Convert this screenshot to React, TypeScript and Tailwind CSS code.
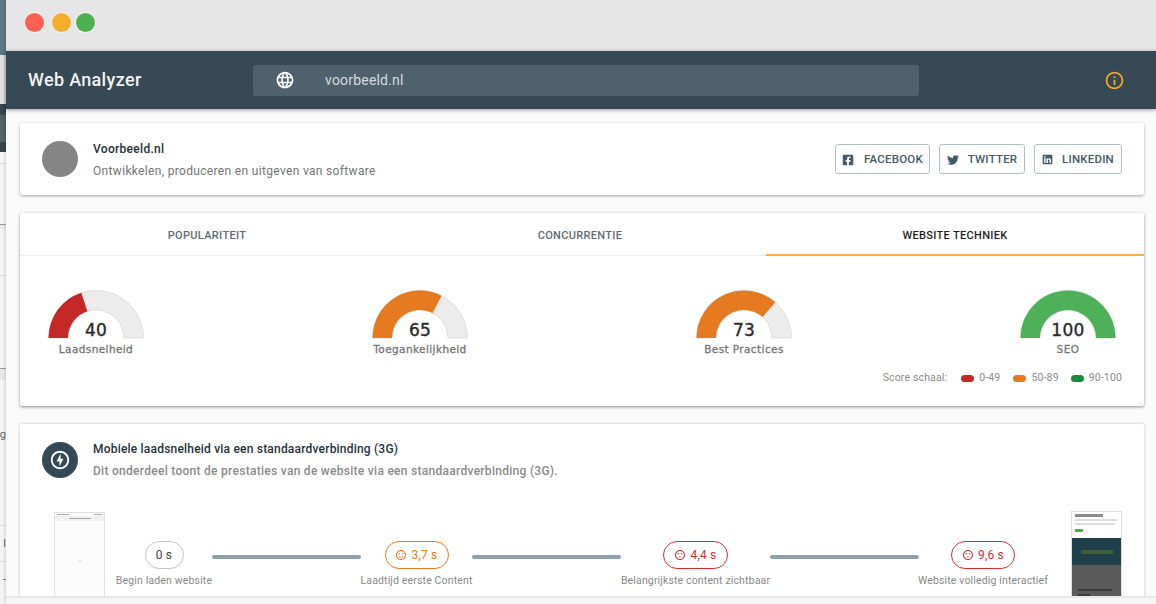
import React from "react";
import { FaFacebookSquare, FaTwitter, FaLinkedin } from "react-icons/fa";
import {
  MdLanguage,
  MdInfoOutline,
  MdOutlineOfflineBolt,
  MdSentimentDissatisfied,
  MdOutlineSentimentSatisfied,
} from "react-icons/md";

function Gauge({ score, color, label }: { score: number; color: string; label: string }) {
  const cx = 50;
  const cy = 50;
  const R = 47.5;
  const r = 28;
  const a = Math.PI * (1 - score / 100);
  const ox = cx + R * Math.cos(a);
  const oy = cy - R * Math.sin(a);
  const ix = cx + r * Math.cos(a);
  const iy = cy - r * Math.sin(a);
  const bg = `M${cx - R} ${cy}A${R} ${R} 0 0 1 ${cx + R} ${cy}L${cx + r} ${cy}A${r} ${r} 0 0 0 ${cx - r} ${cy}Z`;
  const fg = `M${cx - R} ${cy}A${R} ${R} 0 0 1 ${ox} ${oy}L${ix} ${iy}A${r} ${r} 0 0 0 ${cx - r} ${cy}Z`;
  return (
    <div className="w-[100px] flex flex-col items-center">
      <div className="relative w-[100px] h-[51px]">
        <svg width="100" height="51" viewBox="0 0 100 51" className="block">
          <path d={bg} fill="#ececec" stroke="#d9d9d9" strokeWidth="0.8" />
          <path d={fg} fill={color} />
        </svg>
        <div className="absolute left-0 right-0 top-[32px] text-center text-[17px] leading-[21px] font-['DejaVu_Sans',sans-serif] font-medium tracking-[0.3px] text-[#2b2b2b] [-webkit-text-stroke:0.4px_#2b2b2b]">
          {score}
        </div>
      </div>
      <div className="mt-[3px] whitespace-nowrap text-[10.5px] leading-[15px] font-['DejaVu_Sans',sans-serif] tracking-[0.4px] text-[#757575] [-webkit-text-stroke:0.3px_#757575]">
        {label}
      </div>
    </div>
  );
}

function Social({ icon, label, w, gap }: { icon: React.ReactNode; label: string; w: string; gap: string }) {
  return (
    <div className={`${w} ${gap} h-[30px] pt-px flex items-center justify-center rounded-[3px] border border-[#b0bec5] text-[11.5px] font-medium tracking-[0.2px] text-[#455a64]`}>
      {icon}
      <span>{label}</span>
    </div>
  );
}

function Step({
  value,
  label,
  w,
  pill,
  face,
}: {
  value: string;
  label: string;
  w: string;
  pill: string;
  face?: React.ReactNode;
}) {
  return (
    <div className={`${w} shrink-0 flex flex-col items-center`}>
      <div className={`${pill} h-[28px] rounded-full border bg-white flex items-center justify-center gap-[4px] text-[12px] tracking-[0.2px]`}>
        {face}
        <span>{value}</span>
      </div>
      <div className="mt-[4px] whitespace-nowrap text-[10.5px] leading-[15px] tracking-[0.15px] text-[#888888]">{label}</div>
    </div>
  );
}

function Bar() {
  return <div className="w-[149px] h-[4px] mt-[14px] shrink-0 rounded-full bg-[#90a0a8]" />;
}

function Legend({ color, label, w }: { color: string; label: string; w: string }) {
  return (
    <div className={`flex items-center gap-[5px] ${w}`}>
      <span className={`w-[13px] h-[7px] rounded-full ${color}`} />
      <span>{label}</span>
    </div>
  );
}

export default function App() {
  return (
    <div className="w-[1156px] h-[604px] overflow-hidden flex bg-white font-['Roboto',sans-serif]">
      <aside className="w-[6px] h-full shrink-0 flex flex-col bg-[#f4f4f4] overflow-hidden text-[11px] text-[#666666]">
        <div className="h-[55px] shrink-0 bg-[#5c7986]" />
        <div className="h-[49px] shrink-0 bg-[#e2e2e2]" />
        <div className="h-[11px] shrink-0 bg-[#37474f]" />
        <div className="h-[27px] shrink-0 bg-[#52616a]" />
        <div className="h-[10px] shrink-0 bg-[#37474f]" />
        <div className="h-[11px] shrink-0 bg-[#f5f5f5]" />
        <div className="h-[61px] shrink-0 border-t border-[#e2e2e2]" />
        <div className="h-[5px] shrink-0 border-t border-[#9a9a9a] bg-[#e9e9e9]" />
        <div className="h-[46px] shrink-0" />
        <div className="h-[93px] shrink-0 border-t border-[#dddddd]" />
        <div className="h-[12px] shrink-0 border-t border-[#9a9a9a] bg-[#e9e9e9]" />
        <div className="h-[145px] shrink-0 flex flex-col">
          <div className="mt-[48px] leading-[14px] w-[6px] overflow-hidden flex justify-end">g</div>
        </div>
        <div className="h-[36px] shrink-0 border-t border-[#dddddd] flex items-center justify-end leading-none">l</div>
        <div className="h-[36px] shrink-0 border-t border-[#dddddd] flex items-center justify-end leading-none">-</div>
      </aside>

      <div className="flex-1 min-w-0 h-full flex flex-col bg-[#fafafa] shadow-[-1px_0_3px_rgba(0,0,0,0.15)]">
        <div className="h-[51px] shrink-0 bg-[#e6e6e6] flex items-center gap-[6px] pl-[19px] pb-[7px]">
          <span className="w-[19px] h-[19px] rounded-full bg-[#ff5f52] shadow-[0_0_0_1px_#f4f4f4]" />
          <span className="w-[19px] h-[19px] ml-[2px] rounded-full bg-[#f5ad2e] shadow-[0_0_0_1px_#f4f4f4]" />
          <span className="w-[19px] h-[19px] -ml-[1px] rounded-full bg-[#4caf50] shadow-[0_0_0_1px_#f4f4f4]" />
        </div>

        <header className="h-[58px] shrink-0 z-10 bg-[#374955] shadow-[0_1px_4px_rgba(0,0,0,0.4)] flex items-center pl-[22px]">
          <div className="w-[225px] shrink-0 pb-[2px] text-[18px] font-medium tracking-[0.33px] text-white/95">Web Analyzer</div>
          <div className="w-[666px] h-[31px] rounded-[3px] bg-[#4f616c] flex items-center pl-[22px]">
            <MdLanguage className="w-[20px] h-[20px] text-white" />
            <span className="ml-[30px] text-[14px] tracking-[0.2px] text-[#d5dcdf]">voorbeeld.nl</span>
          </div>
          <MdInfoOutline className="w-[21px] h-[21px] ml-[185px] text-[#f5a623]" />
        </header>

        <main className="flex-1 min-h-0 overflow-hidden pl-[14px] pr-[12px] pt-[14px] flex flex-col gap-[18px]">
          <section className="h-[72px] shrink-0 rounded-[3px] bg-white shadow-[0_1px_3px_rgba(0,0,0,0.35)] flex items-center pl-[22px] pr-[22px]">
            <div className="w-[36px] h-[36px] rounded-full bg-[#858585]" />
            <div className="ml-[15px] flex-1 pt-[2px]">
              <div className="text-[12px] leading-[18px] font-medium tracking-[0.3px] text-[#263238]">Voorbeeld.nl</div>
              <div className="mt-[4px] text-[12px] leading-[18px] tracking-[0.33px] text-[#757575]">
                Ontwikkelen, produceren en uitgeven van software
              </div>
            </div>
            <div className="flex gap-[9px]">
              <Social w="w-[95px]" gap="gap-[10px]" label="FACEBOOK" icon={<FaFacebookSquare className="w-[12px] h-[12px]" />} />
              <Social w="w-[86px]" gap="gap-[9px]" label="TWITTER" icon={<FaTwitter className="w-[12px] h-[12px]" />} />
              <Social w="w-[88px]" gap="gap-[9px]" label="LINKEDIN" icon={<FaLinkedin className="w-[11px] h-[11px]" />} />
            </div>
          </section>

          <section className="h-[193px] shrink-0 rounded-[2px] bg-white shadow-[0_1px_3px_rgba(0,0,0,0.45)] flex flex-col">
            <div className="h-[43px] shrink-0 flex text-[11px] font-medium tracking-[0.33px] border-b border-[#eeeeee]">
              <div className="w-[374px] pt-[5px] flex items-center justify-center text-[#5f6b72]">POPULARITEIT</div>
              <div className="w-[372px] pt-[5px] flex items-center justify-center text-[#5f6b72]">CONCURRENTIE</div>
              <div className="flex-1 pt-[5px] flex items-center justify-center text-[#1f1f1f] border-b-2 border-[#f5b04c] -mb-px">WEBSITE TECHNIEK</div>
            </div>
            <div className="pt-[32px] pl-[26px] pr-[26px] flex justify-between">
              <Gauge score={40} color="#c62828" label="Laadsnelheid" />
              <Gauge score={65} color="#e67a21" label="Toegankelijkheid" />
              <Gauge score={73} color="#e67a21" label="Best Practices" />
              <Gauge score={100} color="#4fb05a" label="SEO" />
            </div>
            <div className="mt-[13px] pr-[22px] flex justify-end items-center h-[16px] text-[10.5px] tracking-[0.15px] text-[#8a8a8a]">
              <span className="mr-[14px]">Score schaal:</span>
              <Legend color="bg-[#c62828]" label="0-49" w="mr-[13px]" />
              <Legend color="bg-[#e67a21]" label="50-89" w="mr-[12px]" />
              <Legend color="bg-[#1e8a3f]" label="90-100" w="" />
            </div>
          </section>

          <section className="shrink-0 h-[200px] rounded-[2px] bg-white shadow-[0_0_3px_rgba(0,0,0,0.25)] pl-[22px] pr-[22px] pt-[18px]">
            <div className="flex items-center h-[36px]">
              <div className="w-[36px] h-[36px] rounded-full bg-[#344955] flex items-center justify-center">
                <MdOutlineOfflineBolt className="w-[22px] h-[22px] text-white" />
              </div>
              <div className="ml-[15px]">
                <div className="text-[12px] leading-[18px] font-medium tracking-[0.2px] text-[#263238]">
                  Mobiele laadsnelheid via een standaardverbinding (3G)
                </div>
                <div className="mt-[4px] text-[12px] leading-[18px] font-medium tracking-[0.28px] text-[#8a8a8a]">
                  Dit onderdeel toont de prestaties van de website via een standaardverbinding (3G).
                </div>
              </div>
            </div>

            <div className="mt-[34px] flex items-start">
              <div className="ml-[12px] w-[51px] h-[110px] shrink-0 border border-[#e2e2e2] bg-[#fcfcfc] overflow-hidden flex flex-col items-center">
                <div className="w-full h-[2px] mt-[1px] flex justify-between px-[2px] blur-[0.5px]">
                  <span className="w-[12px] h-[1px] bg-[#aaaaaa]" />
                  <span className="w-[8px] h-[1px] bg-[#aaaaaa]" />
                </div>
                <div className="w-full h-[5px] bg-[#f0f0f0] flex justify-center items-center blur-[0.5px]">
                  <span className="w-[22px] h-[1px] bg-[#aaaaaa]" />
                </div>
                <span className="mt-[39px] w-[2px] h-[2px] bg-[#e2e2e2]" />
              </div>
              <div className="ml-[11px] pt-[29px] flex items-start">
                <Step w="w-[96px]" pill="w-[39px] border-[#c4c4c4] text-[#444444]" value="0 s" label="Begin laden website" />
                <Bar />
                <Step
                  w="w-[111px]"
                  pill="w-[64px] border-[#e67a21] text-[#e67a21]"
                  value="3,7 s"
                  label="Laadtijd eerste Content"
                  face={<MdOutlineSentimentSatisfied className="w-[12px] h-[12px]" />}
                />
                <Bar />
                <Step
                  w="w-[149px]"
                  pill="w-[65px] border-[#d32f2f] text-[#d32f2f]"
                  value="4,4 s"
                  label="Belangrijkste content zichtbaar"
                  face={<MdSentimentDissatisfied className="w-[12px] h-[12px]" />}
                />
                <Bar />
                <Step
                  w="w-[128px]"
                  pill="w-[64px] border-[#d32f2f] text-[#d32f2f]"
                  value="9,6 s"
                  label="Website volledig interactief"
                  face={<MdSentimentDissatisfied className="w-[12px] h-[12px]" />}
                />
              </div>
              <div className="ml-[24px] -mt-[1px] w-[51px] h-[110px] shrink-0 border border-[#dddddd] overflow-hidden flex flex-col bg-[#5a5a5a]">
                <div className="h-[26px] bg-white px-[3px] pt-[2px] flex flex-col gap-[2px] blur-[0.6px]">
                  <span className="w-[28px] h-[3px] bg-[#8a8a8a]" />
                  <span className="w-[42px] h-[2px] bg-[#dddddd]" />
                  <span className="w-[40px] h-[2px] bg-[#dddddd]" />
                  <span className="w-[8px] h-[3px] mt-[2px] bg-[#4caf50]" />
                </div>
                <div className="h-[27px] bg-[#1f3f4a] flex items-center justify-center">
                  <span className="w-[32px] h-[4px] bg-[#3f5f3a] blur-[0.6px]" />
                </div>
                <div className="flex-1 px-[6px] pt-[24px] flex flex-col gap-[3px] blur-[0.6px]">
                  <span className="w-[34px] h-[2px] bg-[#3a3a3a]" />
                  <span className="w-[12px] h-[2px] bg-[#3a3a3a]" />
                </div>
              </div>
            </div>
          </section>
        </main>

        <footer className="h-[8px] shrink-0 z-10 bg-[#f5f5f5] border-t-2 border-[#e8e8e8]" />
      </div>
    </div>
  );
}
